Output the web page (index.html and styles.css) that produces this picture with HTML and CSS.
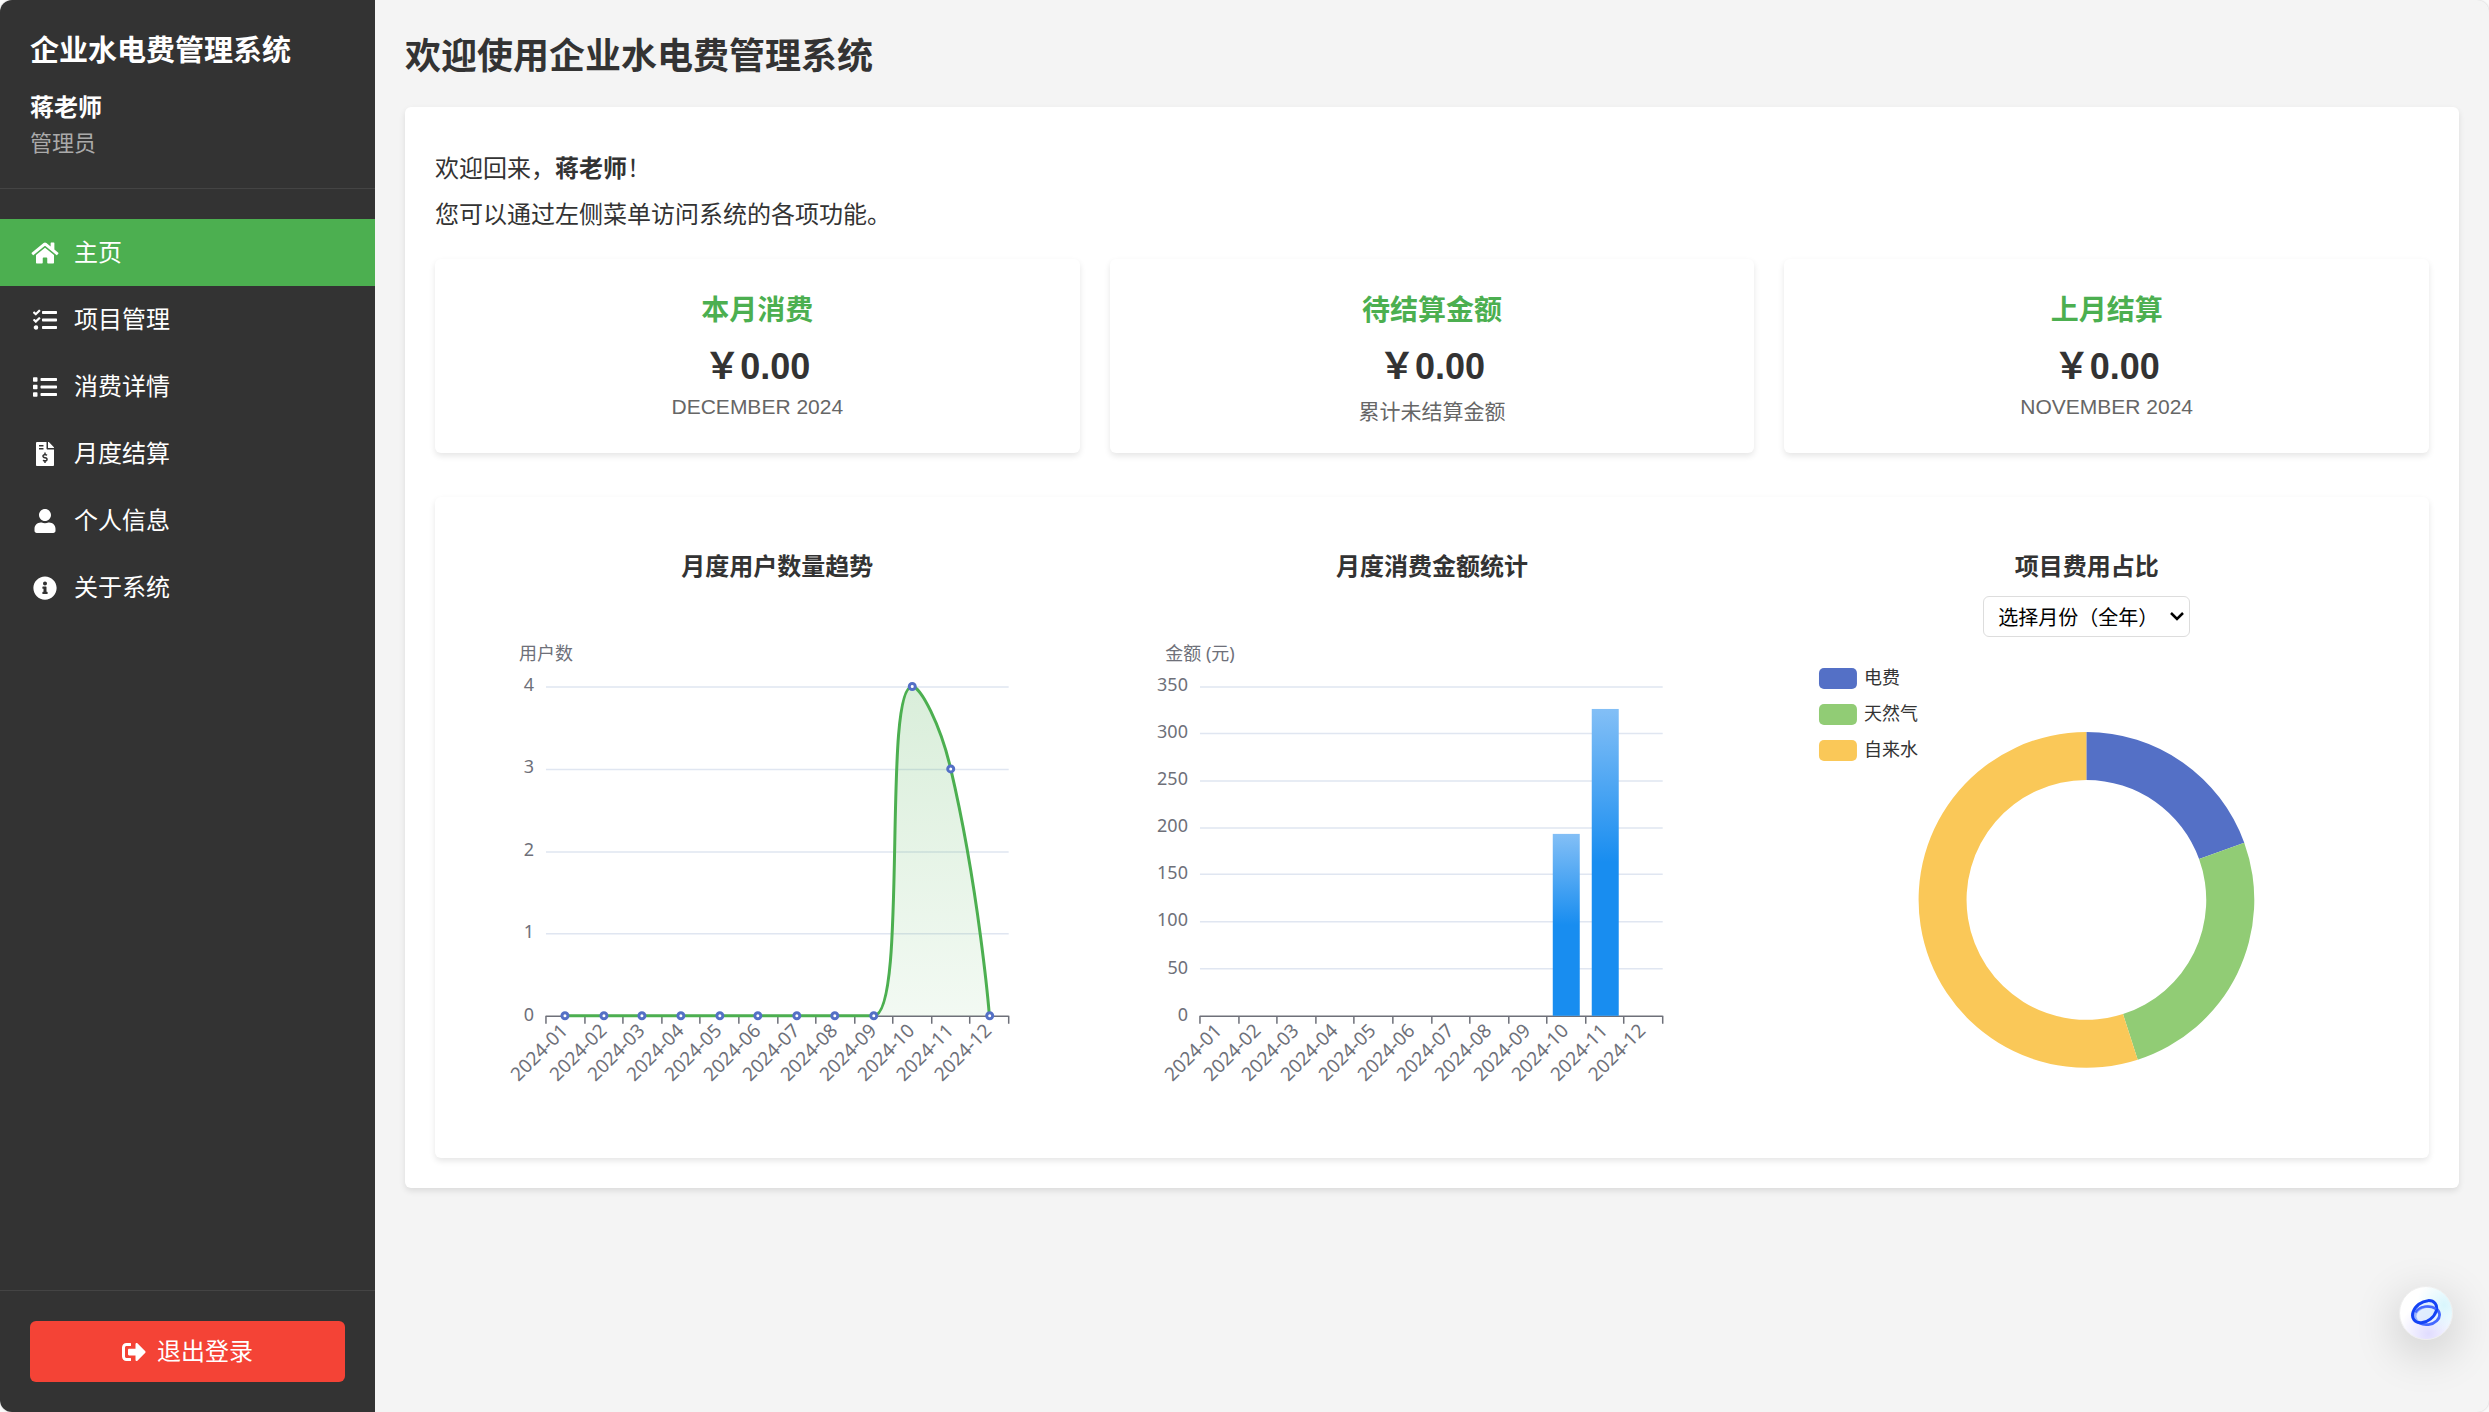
FILE: index.html
```html
<!DOCTYPE html>
<html lang="zh-CN">
<head>
<meta charset="UTF-8">
<meta name="viewport" content="width=device-width, initial-scale=1">
<title>企业水电费管理系统</title>
<link rel="stylesheet" href="styles.css">
</head>
<body>
<div class="app">
  <aside class="sidebar">
    <div class="sidebar-header">
      <h2 class="brand">企业水电费管理系统</h2>
      <div class="user-name">蒋老师</div>
      <div class="user-role">管理员</div>
    </div>
    <nav class="menu">
      <a class="menu-item active" href="#home"><svg class="icon" viewBox="0 0 576 512"><path d="M280.37 148.26L96 300.11V464a16 16 0 0 0 16 16l112.06-.29a16 16 0 0 0 15.92-16V368a16 16 0 0 1 16-16h64a16 16 0 0 1 16 16v95.64a16 16 0 0 0 16 16.05L464 480a16 16 0 0 0 16-16V300L295.67 148.26a12.19 12.19 0 0 0-15.3 0zM571.6 251.47L488 182.56V44.05a12 12 0 0 0-12-12h-56a12 12 0 0 0-12 12v72.61L318.47 43a48 48 0 0 0-61 0L4.34 251.47a12 12 0 0 0-1.6 16.9l25.5 31A12 12 0 0 0 45.15 301l235.22-193.74a12.19 12.19 0 0 1 15.3 0L530.9 301a12 12 0 0 0 16.9-1.6l25.5-31a12 12 0 0 0-1.7-16.93z"/></svg>主页</a>
      <a class="menu-item" href="#projects"><svg class="icon" viewBox="0 0 512 512"><path d="M139.61 35.5a12 12 0 0 0-17 0L58.93 98.81l-22.7-22.12a12 12 0 0 0-17 0L3.53 92.41a12 12 0 0 0 0 17l47.59 47.4a12.78 12.78 0 0 0 17.61 0l15.59-15.62L156.52 69a12.09 12.09 0 0 0 .09-17zm0 159.19a12 12 0 0 0-17 0l-63.68 63.72-22.7-22.1a12 12 0 0 0-17 0L3.53 252a12 12 0 0 0 0 17L51 316.5a12.77 12.77 0 0 0 17.6 0l15.7-15.69 72.2-72.22a12 12 0 0 0 .09-16.9zM64 368c-26.49 0-48.59 21.5-48.59 48S37.53 464 64 464a48 48 0 0 0 0-96zm432 16H208a16 16 0 0 0-16 16v32a16 16 0 0 0 16 16h288a16 16 0 0 0 16-16v-32a16 16 0 0 0-16-16zm0-320H208a16 16 0 0 0-16 16v32a16 16 0 0 0 16 16h288a16 16 0 0 0 16-16V80a16 16 0 0 0-16-16zm0 160H208a16 16 0 0 0-16 16v32a16 16 0 0 0 16 16h288a16 16 0 0 0 16-16v-32a16 16 0 0 0-16-16z"/></svg>项目管理</a>
      <a class="menu-item" href="#details"><svg class="icon" viewBox="0 0 512 512"><path d="M80 368H16a16 16 0 0 0-16 16v64a16 16 0 0 0 16 16h64a16 16 0 0 0 16-16v-64a16 16 0 0 0-16-16zm0-320H16A16 16 0 0 0 0 64v64a16 16 0 0 0 16 16h64a16 16 0 0 0 16-16V64a16 16 0 0 0-16-16zm0 160H16a16 16 0 0 0-16 16v64a16 16 0 0 0 16 16h64a16 16 0 0 0 16-16v-64a16 16 0 0 0-16-16zm416 176H176a16 16 0 0 0-16 16v32a16 16 0 0 0 16 16h320a16 16 0 0 0 16-16v-32a16 16 0 0 0-16-16zm0-320H176a16 16 0 0 0-16 16v32a16 16 0 0 0 16 16h320a16 16 0 0 0 16-16V80a16 16 0 0 0-16-16zm0 160H176a16 16 0 0 0-16 16v32a16 16 0 0 0 16 16h320a16 16 0 0 0 16-16v-32a16 16 0 0 0-16-16z"/></svg>消费详情</a>
      <a class="menu-item" href="#settlement"><svg class="icon" viewBox="0 0 384 512"><path d="M377 105L279.1 7c-4.500-4.500-10.600-7-17-7H256v128h128v-6.100c0-6.300-2.500-12.400-7-16.900zm-153 31V0H24C10.700 0 0 10.700 0 24v464c0 13.300 10.700 24 24 24h336c13.300 0 24-10.700 24-24V160H248c-13.200 0-24-10.800-24-24zM64 72c0-4.420 3.580-8 8-8h80c4.420 0 8 3.580 8 8v16c0 4.420-3.580 8-8 8H72c-4.420 0-8-3.580-8-8V72zm0 80v-16c0-4.420 3.580-8 8-8h80c4.420 0 8 3.580 8 8v16c0 4.420-3.580 8-8 8H72c-4.420 0-8-3.580-8-8zm144 263.880V440c0 4.420-3.580 8-8 8h-16c-4.420 0-8-3.580-8-8v-24.290c-11.290-.58-22.270-4.520-31.370-11.350-3.900-2.930-4.100-8.770-.57-12.140l11.750-11.210c2.770-2.640 6.890-2.760 10.130-.73 3.870 2.420 8.260 3.720 12.820 3.720h28.110c6.500 0 11.800-5.920 11.800-13.190 0-5.950-3.610-11.190-8.770-12.730l-45-13.500c-18.590-5.580-31.580-23.420-31.580-43.390 0-24.520 19.050-44.440 42.670-45.070V232c0-4.420 3.580-8 8-8h16c4.420 0 8 3.580 8 8v24.290c11.290.58 22.270 4.510 31.370 11.350 3.900 2.930 4.100 8.770.57 12.140l-11.750 11.210c-2.770 2.640-6.890 2.760-10.130.73-3.870-2.430-8.260-3.720-12.820-3.720h-28.110c-6.500 0-11.800 5.920-11.800 13.190 0 5.950 3.610 11.190 8.770 12.730l45 13.500c18.590 5.580 31.580 23.420 31.580 43.390 0 24.530-19.050 44.440-42.670 45.070z"/></svg>月度结算</a>
      <a class="menu-item" href="#profile"><svg class="icon" viewBox="0 0 448 512"><path d="M224 256c70.700 0 128-57.300 128-128S294.700 0 224 0 96 57.300 96 128s57.300 128 128 128zm89.600 32h-16.700c-22.200 10.200-46.900 16-72.900 16s-50.600-5.800-72.900-16h-16.700C60.200 288 0 348.200 0 422.400V464c0 26.500 21.500 48 48 48h352c26.500 0 48-21.500 48-48v-41.600c0-74.200-60.200-134.400-134.400-134.400z"/></svg>个人信息</a>
      <a class="menu-item" href="#about"><svg class="icon" viewBox="0 0 512 512"><path d="M256 8C119.043 8 8 119.083 8 256c0 136.997 111.043 248 248 248s248-111.003 248-248C504 119.083 392.957 8 256 8zm0 110c23.196 0 42 18.804 42 42s-18.804 42-42 42-42-18.804-42-42 18.804-42 42-42zm56 254c0 6.627-5.373 12-12 12h-88c-6.627 0-12-5.373-12-12v-24c0-6.627 5.373-12 12-12h12v-64h-12c-6.627 0-12-5.373-12-12v-24c0-6.627 5.373-12 12-12h64c6.627 0 12 5.373 12 12v100h12c6.627 0 12 5.373 12 12v24z"/></svg>关于系统</a>
    </nav>
    <div class="sidebar-footer">
      <button class="logout" type="button"><svg class="icon-logout" viewBox="0 0 512 512"><path d="M497 273L329 441c-15 15-41 4.500-41-17v-96H152c-13.300 0-24-10.700-24-24v-96c0-13.300 10.700-24 24-24h136V88c0-21.400 25.900-32 41-17l168 168c9.300 9.400 9.300 24.600 0 34zM192 436v-40c0-6.600-5.400-12-12-12H96c-17.700 0-32-14.300-32-32V160c0-17.700 14.300-32 32-32h84c6.600 0 12-5.400 12-12V76c0-6.600-5.400-12-12-12H96c-53 0-96 43-96 96v192c0 53 43 96 96 96h84c6.600 0 12-5.400 12-12z"/></svg>退出登录</button>
    </div>
  </aside>

  <main class="content">
    <h1 class="page-title">欢迎使用企业水电费管理系统</h1>
    <section class="panel">
      <p class="welcome">欢迎回来，<strong>蒋老师</strong>！</p>
      <p class="welcome">您可以通过左侧菜单访问系统的各项功能。</p>

      <div class="stats">
        <article class="stat">
          <h3 class="stat-title">本月消费</h3>
          <div class="stat-value">￥0.00</div>
          <div class="stat-label">DECEMBER 2024</div>
        </article>
        <article class="stat">
          <h3 class="stat-title">待结算金额</h3>
          <div class="stat-value">￥0.00</div>
          <div class="stat-label">累计未结算金额</div>
        </article>
        <article class="stat">
          <h3 class="stat-title">上月结算</h3>
          <div class="stat-value">￥0.00</div>
          <div class="stat-label">NOVEMBER 2024</div>
        </article>
      </div>

      <div class="charts">
        <section class="chart">
          <div class="chart-head"><h3 class="chart-title">月度用户数量趋势</h3></div>
          <svg class="plot" viewBox="0 0 625 490" role="img" aria-label="月度用户数量趋势">
            <defs>
              <linearGradient id="areaFill" x1="0" y1="0" x2="0" y2="1">
                <stop offset="0" stop-color="#4caf50" stop-opacity=".21"/>
                <stop offset="1" stop-color="#4caf50" stop-opacity=".07"/>
              </linearGradient>
            </defs>
            <path class="grid" d="M81 49H544M81 131.500H544M81 214H544M81 296H544"/>
            <path class="axis" d="M81 378.500H544M81 378V386M120 378V386M158 378V386M197 378V386M235 378V386M274 378V386M313 378V386M351 378V386M390 378V386M428 378V386M467 378V386M505 378V386M544 378V386"/>
            <text class="tick mid" x="81" y="22">用户数</text>
            <g class="tick end">
              <text x="69" y="53">4</text><text x="69" y="135">3</text><text x="69" y="218">2</text><text x="69" y="300">1</text><text x="69" y="383">0</text>
            </g>
            <g class="tick end month-label">
              <text transform="translate(104 394) rotate(-45)">2024-01</text>
              <text transform="translate(143 394) rotate(-45)">2024-02</text>
              <text transform="translate(181 394) rotate(-45)">2024-03</text>
              <text transform="translate(220 394) rotate(-45)">2024-04</text>
              <text transform="translate(258 394) rotate(-45)">2024-05</text>
              <text transform="translate(297 394) rotate(-45)">2024-06</text>
              <text transform="translate(336 394) rotate(-45)">2024-07</text>
              <text transform="translate(374 394) rotate(-45)">2024-08</text>
              <text transform="translate(413 394) rotate(-45)">2024-09</text>
              <text transform="translate(451 394) rotate(-45)">2024-10</text>
              <text transform="translate(490 394) rotate(-45)">2024-11</text>
              <text transform="translate(528 394) rotate(-45)">2024-12</text>
            </g>
            <path fill="url(#areaFill)" d="M409 378C443.600 378 417.200 48.500 447.500 48.500C455.800 48.500 475.800 87 486 131C514.400 252 524.700 378 524.700 378Z"/>
            <path class="line" d="M100.300 378H409C443.600 378 417.200 48.500 447.500 48.500C455.800 48.500 475.800 87 486 131C514.400 252 524.700 378 524.700 378"/>
            <g class="dots">
              <circle cx="100" cy="378" r="3"/><circle cx="139" cy="378" r="3"/><circle cx="177" cy="378" r="3"/><circle cx="216" cy="378" r="3"/><circle cx="255" cy="378" r="3"/><circle cx="293" cy="378" r="3"/><circle cx="332" cy="378" r="3"/><circle cx="370" cy="378" r="3"/><circle cx="409" cy="378" r="3"/><circle cx="447.500" cy="48.500" r="3"/><circle cx="486" cy="131" r="3"/><circle cx="525" cy="378" r="3"/>
            </g>
          </svg>
        </section>

        <section class="chart">
          <div class="chart-head"><h3 class="chart-title">月度消费金额统计</h3></div>
          <svg class="plot" viewBox="0 0 625 490" role="img" aria-label="月度消费金额统计">
            <defs>
              <linearGradient id="barFill" x1="0" y1="0" x2="0" y2="1">
                <stop offset="0" stop-color="#83bff6"/>
                <stop offset=".5" stop-color="#188df0"/>
                <stop offset="1" stop-color="#188df0"/>
              </linearGradient>
            </defs>
            <path class="grid" d="M80 49H543M80 95.500H543M80 143H543M80 190H543M80 236.500H543M80 284H543M80 331H543"/>
            <path class="axis" d="M80 378.500H543M80 378V386M119 378V386M157 378V386M196 378V386M234 378V386M273 378V386M312 378V386M350 378V386M389 378V386M427 378V386M466 378V386M504 378V386M543 378V386"/>
            <text class="tick mid" x="80" y="22">金额 (元)</text>
            <g class="tick end">
              <text x="68" y="53">350</text><text x="68" y="100">300</text><text x="68" y="147">250</text><text x="68" y="194">200</text><text x="68" y="241">150</text><text x="68" y="288">100</text><text x="68" y="336">50</text><text x="68" y="383">0</text>
            </g>
            <g class="tick end month-label">
              <text transform="translate(103 394) rotate(-45)">2024-01</text>
              <text transform="translate(142 394) rotate(-45)">2024-02</text>
              <text transform="translate(180 394) rotate(-45)">2024-03</text>
              <text transform="translate(219 394) rotate(-45)">2024-04</text>
              <text transform="translate(257 394) rotate(-45)">2024-05</text>
              <text transform="translate(296 394) rotate(-45)">2024-06</text>
              <text transform="translate(335 394) rotate(-45)">2024-07</text>
              <text transform="translate(373 394) rotate(-45)">2024-08</text>
              <text transform="translate(412 394) rotate(-45)">2024-09</text>
              <text transform="translate(450 394) rotate(-45)">2024-10</text>
              <text transform="translate(489 394) rotate(-45)">2024-11</text>
              <text transform="translate(527 394) rotate(-45)">2024-12</text>
            </g>
            <rect x="433" y="196" width="27" height="182" fill="url(#barFill)"/>
            <rect x="472" y="71" width="27" height="307" fill="url(#barFill)"/>
          </svg>
        </section>

        <section class="chart">
          <div class="chart-head">
            <h3 class="chart-title" id="share-title">项目费用占比</h3>
            <div class="month-field">
              <select class="month" aria-labelledby="share-title">
                <option>选择月份（全年）</option>
              </select>
              <svg class="chevron" viewBox="0 0 14 10" fill="none"><path d="M1 2L7 8L13 2" stroke="#000" stroke-width="2.500"/></svg>
            </div>
          </div>
          <svg class="plot" viewBox="0 0 625 490" role="img" aria-label="项目费用占比">
            <rect x="45" y="30" width="38" height="21" rx="5" fill="#5470c6"/>
            <rect x="45" y="66" width="38" height="21" rx="5" fill="#91cc75"/>
            <rect x="45" y="102" width="38" height="21" rx="5" fill="#fac858"/>
            <g class="legend">
              <text x="90" y="46">电费</text><text x="90" y="82">天然气</text><text x="90" y="118">自来水</text>
            </g>
            <path fill="#5470c6" d="M312.500 94A168 168 0 0 1 470.500 204.800L425.300 221.200A120 120 0 0 0 312.500 142Z"/>
            <path fill="#91cc75" d="M470.500 204.800A168 168 0 0 1 363.900 422L349.200 376.300A120 120 0 0 0 425.300 221.200Z"/>
            <path fill="#fac858" d="M363.900 422A168 168 0 1 1 312.500 94V142A120 120 0 1 0 349.200 376.300Z"/>
          </svg>
        </section>
      </div>
    </section>
  </main>
</div>

<button class="assistant" type="button" aria-label="助手">
  <svg class="assistant-logo" viewBox="0 0 30 28" fill="none">
    <ellipse cx="16.300" cy="16.600" rx="12.300" ry="9" transform="rotate(-8 16.300 16.600)" stroke="#4468ff" stroke-width="2.800"/>
    <ellipse cx="13.600" cy="12.700" rx="13.400" ry="9.400" transform="rotate(-38 13.600 12.700)" fill="#d5e8fd" fill-opacity=".6" stroke="#1443f5" stroke-width="3"/>
    <path d="M4.500 13.500C8 7 19 5.500 25 10" stroke="#4468ff" stroke-width="2.500"/>
  </svg>
</button>
</body>
</html>
```
FILE: styles.css
```css
* {
  box-sizing: border-box;
  margin: 0;
  padding: 0;
}

body {
  background: #fafafa;
  color: #333;
  font: 24px/32px "Liberation Sans", "Noto Sans CJK SC", sans-serif;
}

.app {
  display: flex;
  min-height: 100vh;
  border-radius: 12px;
  background: #f4f4f4;
  box-shadow: 0 0 2px rgba(0, 0, 0, .2);
}

/* Sidebar */
.sidebar {
  display: flex;
  flex-direction: column;
  flex: 0 0 375px;
  background: #333;
  color: #fff;
  border-radius: 12px 0 0 12px;
}

.sidebar-header {
  padding: 31px 30px 28px;
  border-bottom: 1px solid #444;
}

.brand {
  margin-bottom: 21px;
  font-size: 29px;
  line-height: 40px;
}

.user-name {
  margin-bottom: 4px;
  font-weight: bold;
}

.user-role {
  color: #aaa;
  font-size: 22px;
}

.menu {
  flex: 1;
  padding-top: 30px;
}

.menu-item {
  display: flex;
  align-items: center;
  gap: 14px;
  height: 67px;
  padding: 0 30px;
  color: #fff;
  text-decoration: none;
}

.menu-item.active {
  background: #4caf50;
}

.icon {
  width: 30px;
  height: 24px;
  fill: currentColor;
}

.sidebar-footer {
  padding: 30px;
  border-top: 1px solid #444;
}

.logout {
  display: flex;
  align-items: center;
  justify-content: center;
  gap: 11px;
  width: 100%;
  height: 61px;
  border: 0;
  border-radius: 6px;
  background: #f44336;
  color: #fff;
  font: inherit;
}

.icon-logout {
  width: 24px;
  height: 24px;
  fill: currentColor;
}

/* Main column */
.content {
  flex: 1;
  min-width: 0;
  padding: 33px 30px 30px;
}

.page-title {
  margin-bottom: 26px;
  font-size: 36px;
  line-height: 48px;
}

.panel {
  padding: 46px 30px 30px;
  border-radius: 6px;
  background: #fff;
  box-shadow: 0 3px 6px rgba(0, 0, 0, .1);
}

.welcome {
  margin-bottom: 14px;
}

.stats {
  display: grid;
  grid-template-columns: repeat(3, 1fr);
  gap: 30px;
  margin: 28px 0 44px;
}

.stat {
  min-height: 194px;
  padding: 32px 30px 28px;
  border-radius: 6px;
  box-shadow: 0 3px 6px rgba(0, 0, 0, .1);
  text-align: center;
}

.stat-title {
  margin-bottom: 12px;
  color: #4caf50;
  font-size: 28px;
  line-height: 40px;
}

.stat-value {
  margin-bottom: 4px;
  font-size: 36px;
  font-weight: bold;
  line-height: 48px;
}

.stat-label {
  color: #666;
  font-size: 21px;
  line-height: normal;
}

/* Charts */
.charts {
  display: grid;
  grid-template-columns: repeat(3, 1fr);
  gap: 30px;
  padding: 54px 30px 30px;
  border-radius: 6px;
  box-shadow: 0 3px 6px rgba(0, 0, 0, .1);
}

.chart {
  min-width: 0;
}

.chart-head {
  display: flex;
  flex-direction: column;
  align-items: center;
  gap: 13px;
  min-height: 87px;
}

.chart-title {
  font-size: 24px;
}

.month-field {
  position: relative;
}

.month {
  display: block;
  width: 207px;
  height: 41px;
  padding: 0 14px;
  border: 1px solid #ddd;
  border-radius: 6px;
  background: #fff;
  color: #000;
  font: 20px "Noto Sans CJK SC", sans-serif;
  appearance: none;
}

.chevron {
  position: absolute;
  top: 15px;
  right: 6px;
  width: 14px;
  height: 10px;
  pointer-events: none;
}

.plot {
  display: block;
  width: 100%;
  height: auto;
}

.grid,
.axis {
  fill: none;
  stroke: #e0e6f1;
  stroke-width: 1.5px;
}

.axis {
  stroke: #6e7079;
}

.tick {
  fill: #6e7079;
  font: 18px "Noto Sans", "Noto Sans CJK SC", sans-serif;
}

.month-label {
  font-size: 19px;
}

.mid {
  text-anchor: middle;
}

.end {
  text-anchor: end;
}

.line {
  fill: none;
  stroke: #4caf50;
  stroke-width: 3px;
}

.dots {
  fill: #fff;
  stroke: #5470c6;
  stroke-width: 3px;
}

.legend {
  fill: #333;
  font: 18px "Noto Sans CJK SC", sans-serif;
}

/* Floating assistant */
.assistant {
  position: fixed;
  right: 36px;
  bottom: 72px;
  display: grid;
  place-items: center;
  width: 54px;
  height: 54px;
  border: 1px solid #eee;
  border-radius: 50%;
  background:
    radial-gradient(circle at 85% 35%, #d8f6fd, transparent 50%),
    radial-gradient(circle at 55% 90%, #e0dcff, transparent 55%),
    #fff;
  box-shadow: 0 12px 48px rgba(0, 0, 0, .2);
}

.assistant-logo {
  width: 30px;
  height: 28px;
}
```
